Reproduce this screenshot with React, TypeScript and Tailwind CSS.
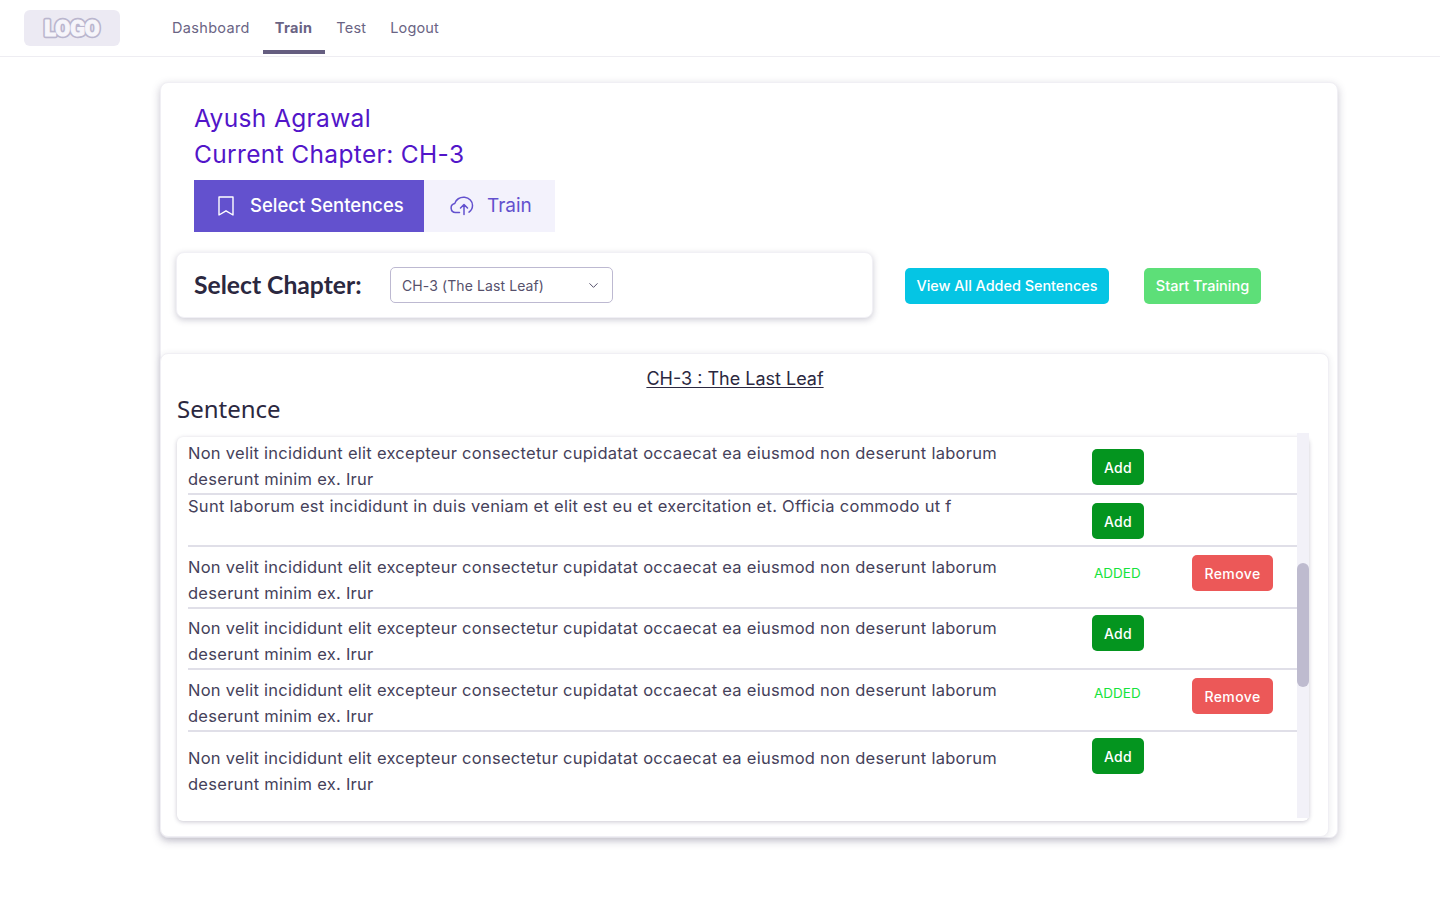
import { ChevronDown } from 'lucide-react';

const LONG_TEXT =
  'Non velit incididunt elit excepteur consectetur cupidatat occaecat ea eiusmod non deserunt laborum deserunt minim ex. Irur';
const SHORT_TEXT =
  'Sunt laborum est incididunt in duis veniam et elit est eu et exercitation et. Officia commodo ut f';

const rows = [
  { text: LONG_TEXT, added: false, row: 'h-[58px]', textPos: 'pt-[3px]', action: 'pt-[12px]', label: '' },
  { text: SHORT_TEXT, added: false, row: 'h-[52px]', textPos: '-mt-[2px]', action: 'pt-[8px]', label: '' },
  { text: LONG_TEXT, added: true, row: 'h-[62px]', textPos: 'pt-[7px]', action: 'pt-[8px]', label: 'mt-[7px]' },
  { text: LONG_TEXT, added: false, row: 'h-[61px]', textPos: 'pt-[6px]', action: 'pt-[6px]', label: '' },
  { text: LONG_TEXT, added: true, row: 'h-[62px]', textPos: 'pt-[7px]', action: 'pt-[8px]', label: 'mt-[4px]' },
  { text: LONG_TEXT, added: false, row: 'h-[89px]', textPos: 'pt-[13px]', action: 'pt-[6px]', label: '' },
];

function Logo() {
  const font = { fontFamily: "Roboto, sans-serif", fontWeight: 900, fontSize: 21.5, letterSpacing: 0 };
  return (
    <div className="flex h-[36px] w-[96px] items-center justify-center rounded-[6px] bg-[#eceaf3]">
      <svg width="72" height="26" viewBox="0 0 72 26">
        <text x="36" y="20.5" textAnchor="middle" {...font} fill="#bab6ce" stroke="#bab6ce" strokeWidth="4.4" strokeLinejoin="round">
          LOGO
        </text>
        <text x="36" y="20.5" textAnchor="middle" {...font} fill="#f6f5fa" stroke="#f6f5fa" strokeWidth="1" strokeLinejoin="round">
          LOGO
        </text>
      </svg>
    </div>
  );
}

function Header() {
  return (
    <header className="flex h-[57px] items-start border-b border-[#eeedf2] pl-[24px] pt-[10px]">
      <Logo />
      <nav className="ml-[39px] flex h-[44px] text-[14.5px] text-[#6a6484]">
        <a className="flex items-center px-[13px] pb-[8px] tracking-[0.33px]">Dashboard</a>
        <a className="flex items-center border-b-[4px] border-[#655e80] pl-[12px] pr-[13px] pb-[4px] font-bold tracking-[0.33px]">
          Train
        </a>
        <a className="flex items-center pl-[11px] pr-[12px] pb-[8px] tracking-[0.2px]">Test</a>
        <a className="flex items-center px-[12px] pb-[8px] tracking-[0.15px]">Logout</a>
      </nav>
    </header>
  );
}

function SentenceRow({ item, last }: { item: (typeof rows)[number]; last: boolean }) {
  return (
    <div className={`ml-[11px] flex ${item.row} ${last ? '' : 'border-b-2 border-[#e0dfe8]'}`}>
      <div className={`w-[904px] shrink-0 pr-[70px] text-[16.5px] leading-[26px] tracking-[0.27px] text-[#45415a] ${item.textPos}`}>
        {item.text}
      </div>
      <div className={`flex w-[100px] shrink-0 items-start ${item.action}`}>
        {item.added ? (
          <span className={`pl-[2px] text-[13.5px] leading-[22px] text-[#16e33c] ${item.label}`}>ADDED</span>
        ) : (
          <button className="h-[36px] w-[52px] rounded-[5px] bg-[#04951f] text-[14px] font-medium tracking-[0.3px] text-white">
            Add
          </button>
        )}
      </div>
      {item.added && (
        <div className={`shrink-0 ${item.action}`}>
          <button className="h-[36px] w-[81px] rounded-[5px] bg-[#ec5858] text-[14px] font-medium tracking-[0.4px] text-white">
            Remove
          </button>
        </div>
      )}
    </div>
  );
}

export default function App() {
  return (
    <div className="min-h-[900px] bg-white font-['Inter',sans-serif]">
      <Header />
      <main className="pl-[160px] pt-[25px]">
        <div className="h-[756px] w-[1178px] rounded-[8px] border border-[#f0eff4] bg-white shadow-[0_3px_8px_rgba(60,55,90,0.28)]">
          <div className="pl-[33px] pt-[17px] text-[24.5px] leading-[36px] tracking-[0.35px] text-[#5215c9]">
            <div>Ayush Agrawal</div>
            <div>Current Chapter: CH-3</div>
          </div>

          <div className="ml-[33px] mt-[8px] flex h-[52px] text-[19px]">
            <div className="flex w-[230px] items-center gap-[16px] bg-[#6351ce] pl-[24px] text-[18.5px] font-medium text-white">
              <svg width="16" height="20" viewBox="0 0 16 20" fill="none" stroke="currentColor" strokeWidth="1.4" strokeLinejoin="round">
                <path d="M1 1h14v18l-7-4.2L1 19z" />
              </svg>
              <span>Select Sentences</span>
            </div>
            <div className="flex w-[131px] items-center gap-[13px] bg-[#f3f2fc] pl-[26px] text-[#6351ce]">
              <svg width="24" height="20" viewBox="0 0 24 20" fill="none" stroke="currentColor" strokeWidth="1.5" strokeLinecap="round" strokeLinejoin="round">
                <path d="M9.5 16.5H5.5a4.5 4.5 0 0 1-.8-8.9A9 8 0 0 1 22.5 9.5a8 8 0 0 1-3.5 6.6" />
                <path d="M14 18.5V8.5M10.5 12L14 8.5l3.5 3.5" />
              </svg>
              <span>Train</span>
            </div>
          </div>

          <div className="mt-[20px] flex items-center">
            <div className="ml-[15px] flex h-[66px] w-[697px] items-center rounded-[8px] border border-[#f1f0f5] bg-white pl-[17px] shadow-[0_2px_6px_rgba(60,55,90,0.25)]">
              <span className="w-[196px] font-['Lato',sans-serif] text-[24.7px] font-bold text-[#2b2840]">
                Select Chapter:
              </span>
              <div className="flex h-[36px] w-[223px] items-center justify-between rounded-[5px] border border-[#bdb9d1] pl-[11px] pr-[11px] text-[14px] tracking-[0.1px] text-[#56516c]">
                <span>CH-3 (The Last Leaf)</span>
                <ChevronDown size={15} strokeWidth={1.6} />
              </div>
            </div>
            <button className="ml-[32px] mt-[2px] h-[36px] w-[204px] rounded-[5px] bg-[#05c5e4] text-[14.4px] font-medium text-white">
              View All Added Sentences
            </button>
            <button className="ml-[35px] mt-[2px] h-[36px] w-[117px] rounded-[5px] bg-[#5ddf78] text-[14.5px] font-medium text-white">
              Start Training
            </button>
          </div>

          <section className="-ml-px mt-[35px] h-[484px] w-[1169px] rounded-[8px] border border-[#f0eff4] bg-white pl-[16px] shadow-[0_1px_6px_rgba(60,55,90,0.12)]">
            <h2 className="w-[1116px] pt-[12px] text-center text-[18px] leading-[26px] text-[#2b2840] underline underline-offset-2">
              CH-3 : The Last Leaf
            </h2>
            <h3 className="font-['Noto_Sans',sans-serif] text-[24px] leading-[34px] text-[#2b2840]">Sentence</h3>
            <div className="relative mt-[11px] h-[384px] w-[1132px] rounded-[6px] bg-white shadow-[0_1px_4px_rgba(60,55,90,0.28)]">
              {rows.map((item, i) => (
                <SentenceRow key={i} item={item} last={i === rows.length - 1} />
              ))}
              <div className="absolute right-0 top-[-4px] h-[385px] w-[12px] bg-[#f2f1f8]">
                <div className="absolute left-0 top-[130px] h-[124px] w-[12px] rounded-full bg-[#bebbcf]" />
              </div>
            </div>
          </section>
        </div>
      </main>
    </div>
  );
}
